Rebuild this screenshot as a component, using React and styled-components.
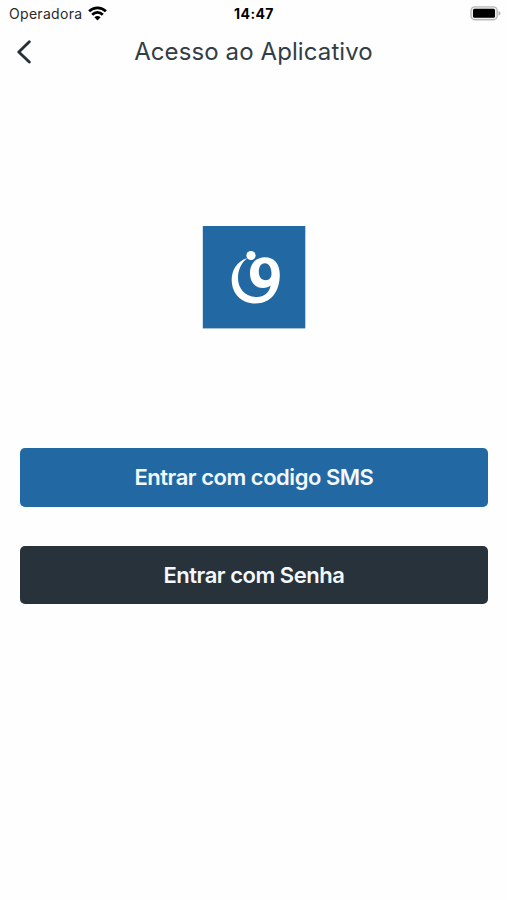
import React from 'react'
import styled, { createGlobalStyle } from 'styled-components';

const GlobalStyle = createGlobalStyle`
   * {
      box-sizing: border-box;
   }

   body {
      margin: 0;
      background: #fefefe;
      font-family: Inter, "Liberation Sans", sans-serif;
   }
`
const Screen = styled.div`
   display: flex;
   flex-direction: column;
   width: 100%;
   height: 900px;
   background: #fefefe;
`
const StatusBar = styled.div`
   display: grid;
   grid-template-columns: 1fr auto 1fr;
   align-items: center;
   height: 27px;
   padding: 0 6px 0 9px;
   color: #2a2a2a;
`
const Carrier = styled.div`
   display: flex;
   align-items: center;
   gap: 6px;
   font-size: 14px;
   letter-spacing: .3px;
`
const Clock = styled.span`
   margin-left: -2px;
   font-size: 14px;
   font-weight: 700;
   letter-spacing: .4px;
   color: #000;
`
const Battery = styled.div`
   display: flex;
   justify-content: flex-end;
`
const Header = styled.header`
   display: grid;
   grid-template-columns: 48px 1fr 48px;
   align-items: center;
   height: 49px;
`
const BackButton = styled.button`
   display: flex;
   align-items: center;
   height: 48px;
   padding: 0 0 0 15px;
   border: 0;
   background: none;
   cursor: pointer;
`
const Title = styled.h1`
   margin: 0;
   padding-bottom: 1px;
   font-size: 24px;
   font-weight: 400;
   letter-spacing: .1px;
   text-align: center;
   color: #333d44;
`
const LogoBox = styled.div`
   display: flex;
   justify-content: center;
   padding: 149.5px 0 119.5px 1px;

   svg {
      display: block;
   }
`
const Actions = styled.div`
   display: flex;
   flex-direction: column;
   gap: 39.2px;
   padding: 0 19.5px 0 20.4px;
`
const ActionButton = styled.button`
   height: 58.5px;
   padding: 0;
   border: 0;
   border-radius: 5px;
   background: ${props => props.$background};
   color: #f3f8fc;
   font-family: inherit;
   font-size: 22px;
   font-weight: 600;
   letter-spacing: -.47px;
   cursor: pointer;
`

const WifiIcon = () => (
   <svg width="19" height="15" viewBox="0 0 19 15" fill="none" stroke="#000" strokeWidth="2.7">
      <path d="M1.1 5.3C5.8 .7 13.2 .7 17.9 5.3" />
      <path d="M4.2 8.7c3-3 7.6-3 10.6 0" />
      <path d="M6.4 11.3c1.7-1.7 4.5-1.7 6.2 0L9.5 14.5z" fill="#000" stroke="none" />
   </svg>
)

const BatteryIcon = () => (
   <svg width="31" height="15" viewBox="0 0 31 15">
      <rect x="1" y=".9" width="26.2" height="12.8" rx="3.8" fill="#eee" stroke="#b9b9b9" strokeWidth="1.4" />
      <rect x="3" y="2.8" width="22" height="9" rx="1.5" fill="#000" />
      <path d="M28.5 5v4.7c1.6-.5 2-1.4 2-2.35S30.1 5.5 28.5 5z" fill="#b5b5b5" />
   </svg>
)

const ChevronLeft = () => (
   <svg width="18" height="25" viewBox="0 0 18 25" fill="none" stroke="#25303a" strokeWidth="2.9" strokeLinecap="round" strokeLinejoin="round">
      <path d="M14.3 2.8L3.8 13l10.5 10" />
   </svg>
)

const Logo = () => (
   <svg width="104" height="103" viewBox="202 225.5 104 103">
      <rect x="202.8" y="225.5" width="102.5" height="102.4" fill="#2269a3" />
      <circle cx="251" cy="255" r="4.6" fill="#fff" />
      {/* crescent that runs into the stem of the nine */}
      <path
         fill="#fff"
         fillRule="evenodd"
         d="M247.5 257.5C236 261 231.7 271 231.7 279C231.7 293 241 303 255.500 303C271 303 279.8 291 279.8 274C279.8 263 274 256.700 265 256.700C256 256.700 250 263 250 272.500C250 282 255.500 287.500 263 287.500C266 287.500 269 286.500 270.700 285C269 292.500 264 296.500 257 296.500C245 296.500 238 288 238 277.500C238 269.500 241 262.500 247.500 257.500Z M265 262.700C261.200 262.700 258.800 266 258.800 271C258.800 276.500 261.500 279.700 265.500 279.700C269.500 279.700 271.500 277 271.500 273C271.500 267 269 262.700 265 262.700Z"
      />
   </svg>
)

const App = () => {
   return (
      <>
         <GlobalStyle />
         <Screen>
            <StatusBar>
               <Carrier>
                  <span>Operadora</span>
                  <WifiIcon />
               </Carrier>
               <Clock>14:47</Clock>
               <Battery>
                  <BatteryIcon />
               </Battery>
            </StatusBar>
            <Header>
               <BackButton aria-label="Voltar">
                  <ChevronLeft />
               </BackButton>
               <Title>Acesso ao Aplicativo</Title>
            </Header>
            <LogoBox>
               <Logo />
            </LogoBox>
            <Actions>
               <ActionButton $background="#2269a3">Entrar com codigo SMS</ActionButton>
               <ActionButton $background="#27323b">Entrar com Senha</ActionButton>
            </Actions>
         </Screen>
      </>
   )
}

export default App
